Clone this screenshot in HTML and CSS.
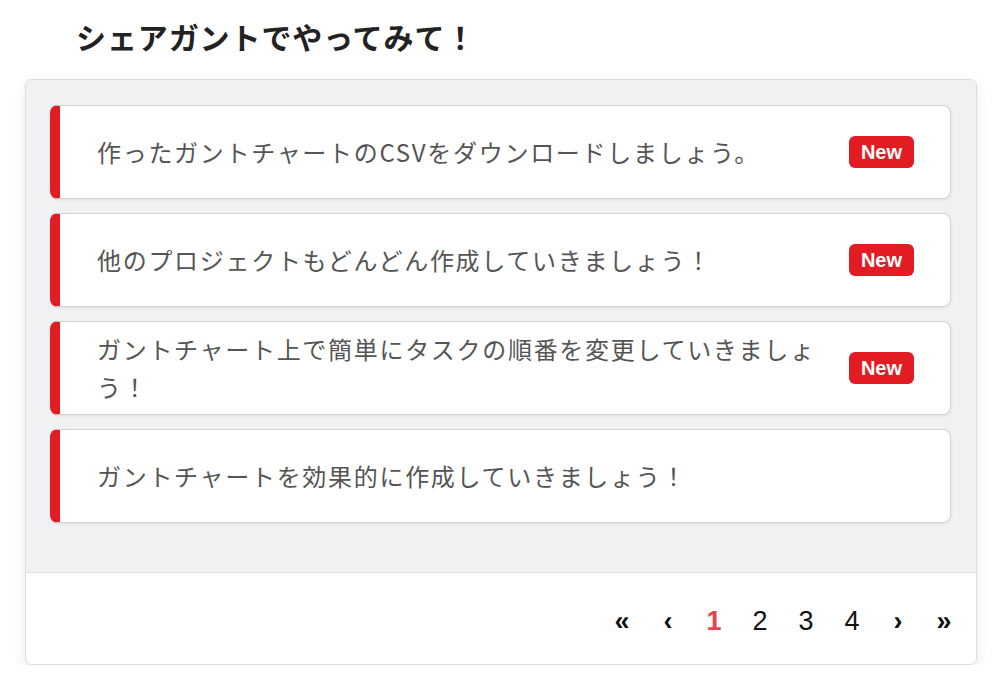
FILE: index.html
```html
<!DOCTYPE html>
<html lang="ja">
<head>
<meta charset="utf-8">
<link rel="stylesheet" href="styles.css">
</head>
<body>
<h2 class="title">シェアガントでやってみて！</h2>
<div class="card">
  <div class="card-body">
    <div class="item">
      <div class="item-text">作ったガントチャートのCSVをダウンロードしましょう。</div>
      <span class="badge">New</span>
    </div>
    <div class="item">
      <div class="item-text">他のプロジェクトもどんどん作成していきましょう！</div>
      <span class="badge">New</span>
    </div>
    <div class="item">
      <div class="item-text">ガントチャート上で簡単にタスクの順番を変更していきましょう！</div>
      <span class="badge">New</span>
    </div>
    <div class="item">
      <div class="item-text">ガントチャートを効果的に作成していきましょう！</div>
    </div>
  </div>
  <div class="card-footer">
    <nav class="pager">
      <a class="page arrow">«</a>
      <a class="page arrow">‹</a>
      <a class="page current">1</a>
      <a class="page">2</a>
      <a class="page">3</a>
      <a class="page">4</a>
      <a class="page arrow">›</a>
      <a class="page arrow">»</a>
    </nav>
  </div>
</div>
</body>
</html>
```
FILE: styles.css
```css
html, body {
  margin: 0;
  padding: 0;
  background: #ffffff;
}
body {
  font-family: "Noto Sans CJK JP", "Noto Sans", sans-serif;
  padding: 13px 15px 0 25px;
}
.title {
  margin: 0 0 20px 0;
  padding-left: 51px;
  font-size: 30px;
  line-height: 46px;
  font-weight: 700;
  color: #222;
  letter-spacing: 0.9px;
}
.card {
  width: 950px;
  border: 1px solid #dcdcdc;
  border-radius: 7px;
  overflow: hidden;
  box-shadow: 0 5px 14px rgba(0, 0, 0, 0.09);
  background: #fff;
}
.card-body {
  background: #f0f1f3;
  padding: 25px 25px 49px 24px;
  display: flex;
  flex-direction: column;
  gap: 14px;
  border-bottom: 1px solid #dcdcdc;
}
.item {
  display: flex;
  align-items: center;
  height: 94px;
  box-sizing: border-box;
  background: #fff;
  border: 1px solid #d3d3d3;
  border-left: 10px solid #e31b23;
  border-radius: 8px;
  box-shadow: 0 1px 3px rgba(0, 0, 0, 0.08);
  padding: 0 36px 0 37px;
}
.item-text {
  flex: 1;
  font-size: 24px;
  line-height: 38px;
  letter-spacing: 1.7px;
  color: #555;
  padding-right: 24px;
}
.badge {
  flex: none;
  font-family: "Liberation Sans", Arial, sans-serif;
  font-weight: 700;
  font-size: 20px;
  line-height: 32px;
  height: 32px;
  padding: 0 12px;
  color: #fff;
  background: #e31b23;
  border-radius: 6px;
}
.card-footer {
  height: 91px;
  display: flex;
  align-items: center;
  justify-content: flex-end;
  padding-right: 9px;
}
.pager {
  display: flex;
  padding-top: 4px;
}
.page {
  width: 46px;
  text-align: center;
  font-family: "Liberation Sans", Arial, sans-serif;
  font-size: 27px;
  line-height: 40px;
  color: #111;
}
.page.arrow {
  font-weight: 700;
}
.page.current {
  color: #e8424a;
  font-weight: 700;
}
```
